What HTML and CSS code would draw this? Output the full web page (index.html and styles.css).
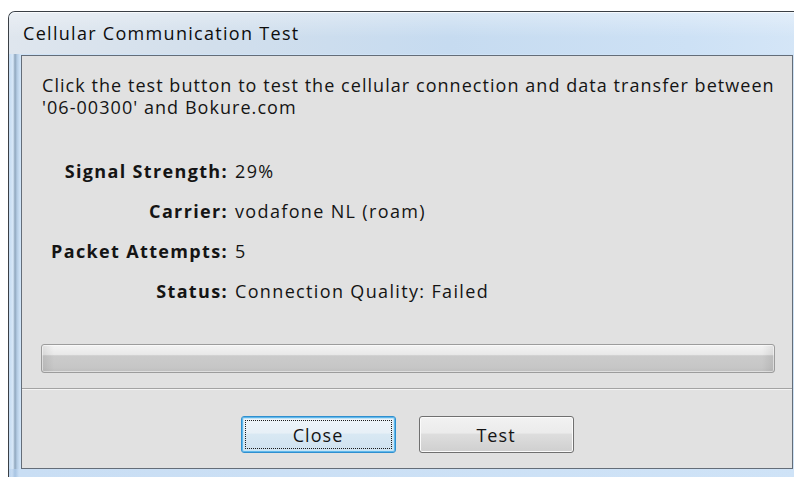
FILE: index.html
```html
<!DOCTYPE html>
<html lang="en">
<head>
<meta charset="utf-8">
<title>Cellular Communication Test</title>
<link rel="stylesheet" href="styles.css">
</head>
<body>
<div class="window">
  <div class="titlebar">Cellular Communication Test</div>
  <div class="frame-body">
    <div class="client">
      <div class="content">
        <p class="intro">Click the test button to test the cellular connection and data transfer between<br>'06-00300' and Bokure.com</p>
        <div class="fields">
          <div class="label">Signal Strength:</div><div class="value">29%</div>
          <div class="label">Carrier:</div><div class="value">vodafone NL (roam)</div>
          <div class="label">Packet Attempts:</div><div class="value">5</div>
          <div class="label">Status:</div><div class="value">Connection Quality: Failed</div>
        </div>
        <div class="progress"></div>
      </div>
      <div class="footer">
        <button class="btn btn-default" type="button"><span class="focus">Close</span></button>
        <button class="btn" type="button"><span class="focus-off">Test</span></button>
      </div>
    </div>
  </div>
</div>
</body>
</html>
```

FILE: styles.css
```css
html, body {
  margin: 0;
  padding: 0;
  background: #ffffff;
  overflow: hidden;
  width: 794px;
  height: 477px;
}

body {
  font-family: "Open Sans", "Noto Sans", sans-serif;
  color: #141414;
}

/* window chrome */
.window {
  margin: 11px 0 0 8px;
  width: 800px;
  height: 480px;
  border-top: 1px solid #3a3f45;
  border-left: 1px solid #3a3f45;
  border-top-left-radius: 7px;
  background: linear-gradient(90deg, #b9d3ee 0, #c8dcf2 3px, #a8c4e2 6px, #c9def4 10px, #cfe3f7 100%);
  box-sizing: border-box;
  display: flex;
  flex-direction: column;
}

.titlebar {
  height: 42px;
  flex: none;
  padding-left: 14px;
  display: flex;
  align-items: center;
  font-size: 18px;
  letter-spacing: 1.3px;
  color: #0d0d0d;
  border-top-left-radius: 6px;
  background:
    linear-gradient(180deg, rgba(255,255,255,0.35) 0, rgba(255,255,255,0) 60%),
    linear-gradient(90deg, #dfe6ee 0, #d2dfec 25%, #c6dbf0 55%, #cde1f5 85%, #d5e6f7 100%);
  box-shadow: inset 0 1px 0 rgba(255,255,255,0.7);
}

.frame-body {
  flex: none;
  padding: 1px 0 0 12px;
  background: linear-gradient(90deg, #c4dbf2 0, #d8e8f8 4px, #8fa6bd 6px, #b3cbe3 8px, #cfe3f7 11px);
}

.client {
  width: 770px;
  height: 412px;
  border: 1px solid #646d78;
  background: #e1e1e1;
  display: flex;
  flex-direction: column;
  font-size: 18px;
  letter-spacing: 1.05px;
}

.content {
  height: 333px;
  flex: none;
  padding: 0 17px 0 20px;
  box-sizing: border-box;
  border-bottom: 1px solid #a3a3a3;
  box-shadow: 0 1px 0 #f4f4f4;
}

.intro {
  margin: 18px 0 0 0;
  line-height: 22px;
  white-space: nowrap;
}

/* label / value pairs */
.fields {
  display: grid;
  grid-template-columns: 186px auto;
  column-gap: 7px;
  row-gap: 17px;
  margin-top: 42px;
  line-height: 23px;
}

.label {
  font-weight: 700;
  text-align: right;
  letter-spacing: 1.35px;
}

.value {
  letter-spacing: 1.35px;
}

.progress {
  margin: 41px 0 0 -1px;
  height: 27px;
  border: 1px solid #9c9c9c;
  border-radius: 3px;
  background:
    linear-gradient(90deg, rgba(0,0,0,0.08) 0, rgba(0,0,0,0) 12px, rgba(0,0,0,0) calc(100% - 12px), rgba(0,0,0,0.08) 100%),
    linear-gradient(180deg, #f3f3f3 0, #e9e9e9 35%, #cbcbcb 40%, #c6c6c6 85%, #bdbdbd 100%);
  box-shadow: inset 0 0 0 1px rgba(255,255,255,0.5);
}

.footer {
  flex: 1;
  display: flex;
  justify-content: center;
  align-items: flex-start;
  gap: 23px;
  padding-top: 27px;
}

.btn {
  width: 155px;
  height: 37px;
  padding: 3px;
  margin: 0;
  font-family: inherit;
  font-size: 18px;
  letter-spacing: 1.05px;
  color: #141414;
  border: 1px solid #707070;
  border-radius: 3px;
  background: linear-gradient(180deg, #f2f2f2 0, #ebebeb 45%, #dddddd 50%, #cfcfcf 100%);
  box-shadow: inset 0 0 0 1px #fbfbfb;
  display: flex;
  box-sizing: border-box;
}

.btn-default {
  border-color: #2f8fcf;
  box-shadow: inset 0 0 0 1px #5fb7ea, inset 0 0 0 2px #c4e4f6;
  background: linear-gradient(180deg, #eef5fa 0, #e7f0f7 45%, #d8e8f3 50%, #cfe2ef 100%);
}

.focus, .focus-off {
  flex: 1;
  display: flex;
  align-items: center;
  justify-content: center;
  border: 1px dotted transparent;
}

.focus {
  border-color: #1b1b1b;
}
```
